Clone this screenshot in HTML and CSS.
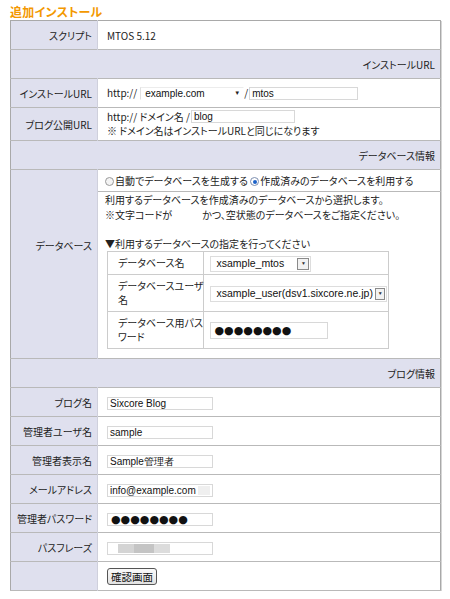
FILE: index.html
```html
<!DOCTYPE html>
<html lang="ja">
<head>
<meta charset="utf-8">
<title>追加インストール</title>
<link rel="stylesheet" href="styles.css">
</head>
<body>
<div class="page">
  <h1 class="title">追加インストール</h1>
  <table class="form">
    <tr><th>スクリプト</th><td>MTOS 5.12</td></tr>
    <tr class="sec"><td colspan="2">インストールURL</td></tr>
    <tr>
      <th>インストールURL</th>
      <td>
        <div class="line">http://<span class="select s-url"><span class="val">example.com</span><span class="arrow">▼</span></span>/<span class="input w-mtos">mtos</span></div>
      </td>
    </tr>
    <tr class="tall">
      <th>ブログ公開URL</th>
      <td>
        <div class="line">http:// ドメイン名 /<span class="input w-blog">blog</span></div>
        <div class="note">※ ドメイン名はインストールURLと同じになります</div>
      </td>
    </tr>
    <tr class="sec"><td colspan="2">データベース情報</td></tr>
    <tr class="radio-row">
      <th rowspan="2" class="db-label">データベース</th>
      <td>
        <span class="radio"></span>自動でデータベースを生成する
        <span class="radio on"></span>作成済みのデータベースを利用する
      </td>
    </tr>
    <tr class="db-row">
      <td>
        <p class="desc">利用するデータベースを作成済みのデータベースから選択します。<br>※文字コードが　　　かつ、空状態のデータベースをご指定ください。<br><br>▼利用するデータベースの指定を行ってください</p>
        <table class="inner">
          <tr class="r1">
            <th>データベース名</th>
            <td><span class="select s-db"><span class="val">xsample_mtos</span><span class="btn">▼</span></span></td>
          </tr>
          <tr class="r2">
            <th>データベースユーザ<br>名</th>
            <td><span class="select s-user"><span class="val">xsample_user(dsv1.sixcore.ne.jp)</span><span class="btn">▼</span></span></td>
          </tr>
          <tr class="r2">
            <th>データベース用パス<br>ワード</th>
            <td><span class="input w-dbpw dots">●●●●●●●●</span></td>
          </tr>
        </table>
      </td>
    </tr>
    <tr class="sec"><td colspan="2">ブログ情報</td></tr>
    <tr><th>ブログ名</th><td><span class="input w-f">Sixcore Blog</span></td></tr>
    <tr><th>管理者ユーザ名</th><td><span class="input w-f">sample</span></td></tr>
    <tr><th>管理者表示名</th><td><span class="input w-f">Sample管理者</span></td></tr>
    <tr><th>メールアドレス</th><td><span class="input w-f">info@example.com<span class="blur-tail"></span></span></td></tr>
    <tr><th>管理者パスワード</th><td><span class="input w-f dots">●●●●●●●●</span></td></tr>
    <tr><th>パスフレーズ</th><td><span class="input w-f"><span class="blur b1"></span><span class="blur b2"></span><span class="blur b3"></span></span></td></tr>
    <tr class="btn-row"><th></th><td><button class="button" type="button">確認画面</button></td></tr>
  </table>
</div>
</body>
</html>
```

FILE: styles.css
```css
html, body {
  margin: 0;
  padding: 0;
  background: #ffffff;
}
body {
  font-family: "Noto Sans CJK JP", sans-serif;
  font-size: 10px;
  color: #222222;
  font-feature-settings: "palt";
}
.page {
  padding: 4px 0 0 10px;
}
.title {
  margin: 0;
  height: 16px;
  font-size: 12px;
  line-height: 16px;
  font-weight: bold;
  color: #f39800;
  letter-spacing: 0.3px;
}
.form {
  border-collapse: collapse;
  width: 431px;
  border: 1px solid #a9a9a9;
  box-shadow: 1px 1px 0 #d6d6d6;
}
.form > tbody > tr {
  border-bottom: 1px solid #b9b9b9;
}
.form > tbody > tr > th,
.form > tbody > tr > td {
  height: 28px;
  padding: 0;
  vertical-align: middle;
}
.form > tbody > tr > th {
  box-sizing: border-box;
  width: 87px;
  padding-right: 5px;
  background: #dfe0ee;
  font-weight: normal;
  text-align: right;
  border-right: 1px solid #cfd0dc;
}
.form > tbody > tr > td {
  padding-left: 9px;
  background: #ffffff;
}
.form > tbody > tr.sec > td {
  height: 28px;
  background: #dfe0ee;
  text-align: right;
  padding-right: 5px;
}
.form > tbody > tr.tall > th,
.form > tbody > tr.tall > td {
  height: 32px;
}
.line {
  display: flex;
  align-items: center;
  line-height: 14.5px;
  height: 14.5px;
  white-space: pre;
}
.note {
  line-height: 14.5px;
}
.input, .select {
  display: inline-flex;
  align-items: center;
  box-sizing: border-box;
  height: 13px;
  border: 1px solid #d8d8d8;
  background: #ffffff;
  font-family: "Liberation Sans", Arial, sans-serif;
  font-size: 10px;
  line-height: 11px;
  color: #111111;
  padding: 0 2px;
  vertical-align: middle;
  position: relative;
  white-space: nowrap;
  overflow: hidden;
}
.s-url {
  width: 104px;
  margin-left: 3px;
  border-color: #ececec #ffffff #ffffff #e0e0e0;
  justify-content: space-between;
  padding-left: 4px;
}
.s-url .arrow {
  font-size: 6px;
  color: #222;
  margin-right: 1px;
}
.w-mtos { width: 109px; margin-left: 1px; }
.w-blog { width: 104px; margin-left: 1px; height: 13px; line-height: 10px; }
.w-f { width: 106px; }
.w-dbpw { width: 118px; height: 17px; }
.dots {
  font-family: "DejaVu Sans", sans-serif;
  font-size: 11px;
  letter-spacing: 0;
  padding-left: 3px;
}
.blur-tail {
  display: inline-block;
  width: 24px;
  height: 9px;
  margin-left: 2px;
  background: #efefef;
}
.blur {
  display: inline-block;
  height: 9px;
  background: #cfcfcf;
}
.b1 { width: 16px; margin-left: 8px; background: #d4d4d4; }
.b2 { width: 20px; background: #c4c4c4; }
.b3 { width: 16px; background: #dcdcdc; }

/* database section */
.form > tbody > tr.radio-row > td {
  height: 21px;
  padding-left: 7px;
  white-space: nowrap;
}
.radio {
  display: inline-block;
  box-sizing: border-box;
  width: 9px;
  height: 9px;
  border-radius: 50%;
  border: 1px solid #9a9a9a;
  background: #f4f4f4;
  vertical-align: -1px;
  margin-right: 1px;
  position: relative;
}
.radio.on {
  border-color: #7d8fb0;
  background: #ffffff;
}
.radio.on::after {
  content: "";
  position: absolute;
  left: 1.5px;
  top: 1.5px;
  width: 4px;
  height: 4px;
  border-radius: 50%;
  background: #1c62c9;
}
.form > tbody > tr > th.db-label {
  vertical-align: top;
  padding-top: 68px;
}
.form > tbody > tr.db-row > td {
  height: auto;
  padding: 1px 0 9px 7px;
  vertical-align: top;
}
.desc {
  margin: 0;
  line-height: 14.5px;
}
.inner {
  border-collapse: collapse;
  margin-left: 2px;
  width: 282px;
  border: 1px solid #cccccc;
}
.inner tr {
  border-bottom: 1px solid #cccccc;
}
.inner th {
  box-sizing: border-box;
  width: 96px;
  text-align: left;
  font-weight: normal;
  padding: 0 0 0 10px;
  border-right: 1px solid #cccccc;
  line-height: 14px;
  white-space: nowrap;
}
.inner td {
  padding: 0 0 0 6px;
}
.inner tr.r1 th, .inner tr.r1 td { height: 22px; }
.inner tr.r2 th, .inner tr.r2 td { height: 36px; }
.s-db, .s-user {
  font-size: 10.5px;
  height: 16px;
  border-color: #dddddd;
  padding: 0 1px 0 5px;
  justify-content: space-between;
}
.s-db { width: 101px; }
.s-user { width: 177px; }
.btn {
  display: inline-flex;
  align-items: center;
  justify-content: center;
  box-sizing: border-box;
  width: 12px;
  height: 12px;
  border: 1px solid #8a8a8a;
  font-size: 5px;
  color: #333;
  background: #f2f2f2;
  margin-left: 2px;
}

/* button row */
.btn-row th { border-right: 1px solid #cfd0dc; }
.button {
  font-family: "Noto Sans CJK JP", sans-serif;
  font-size: 10.5px;
  line-height: 13px;
  padding: 1px 3px;
  border: 1px solid #555;
  border-radius: 3px;
  background: linear-gradient(#fafafa, #e2e2e2);
  color: #111;
}
```
